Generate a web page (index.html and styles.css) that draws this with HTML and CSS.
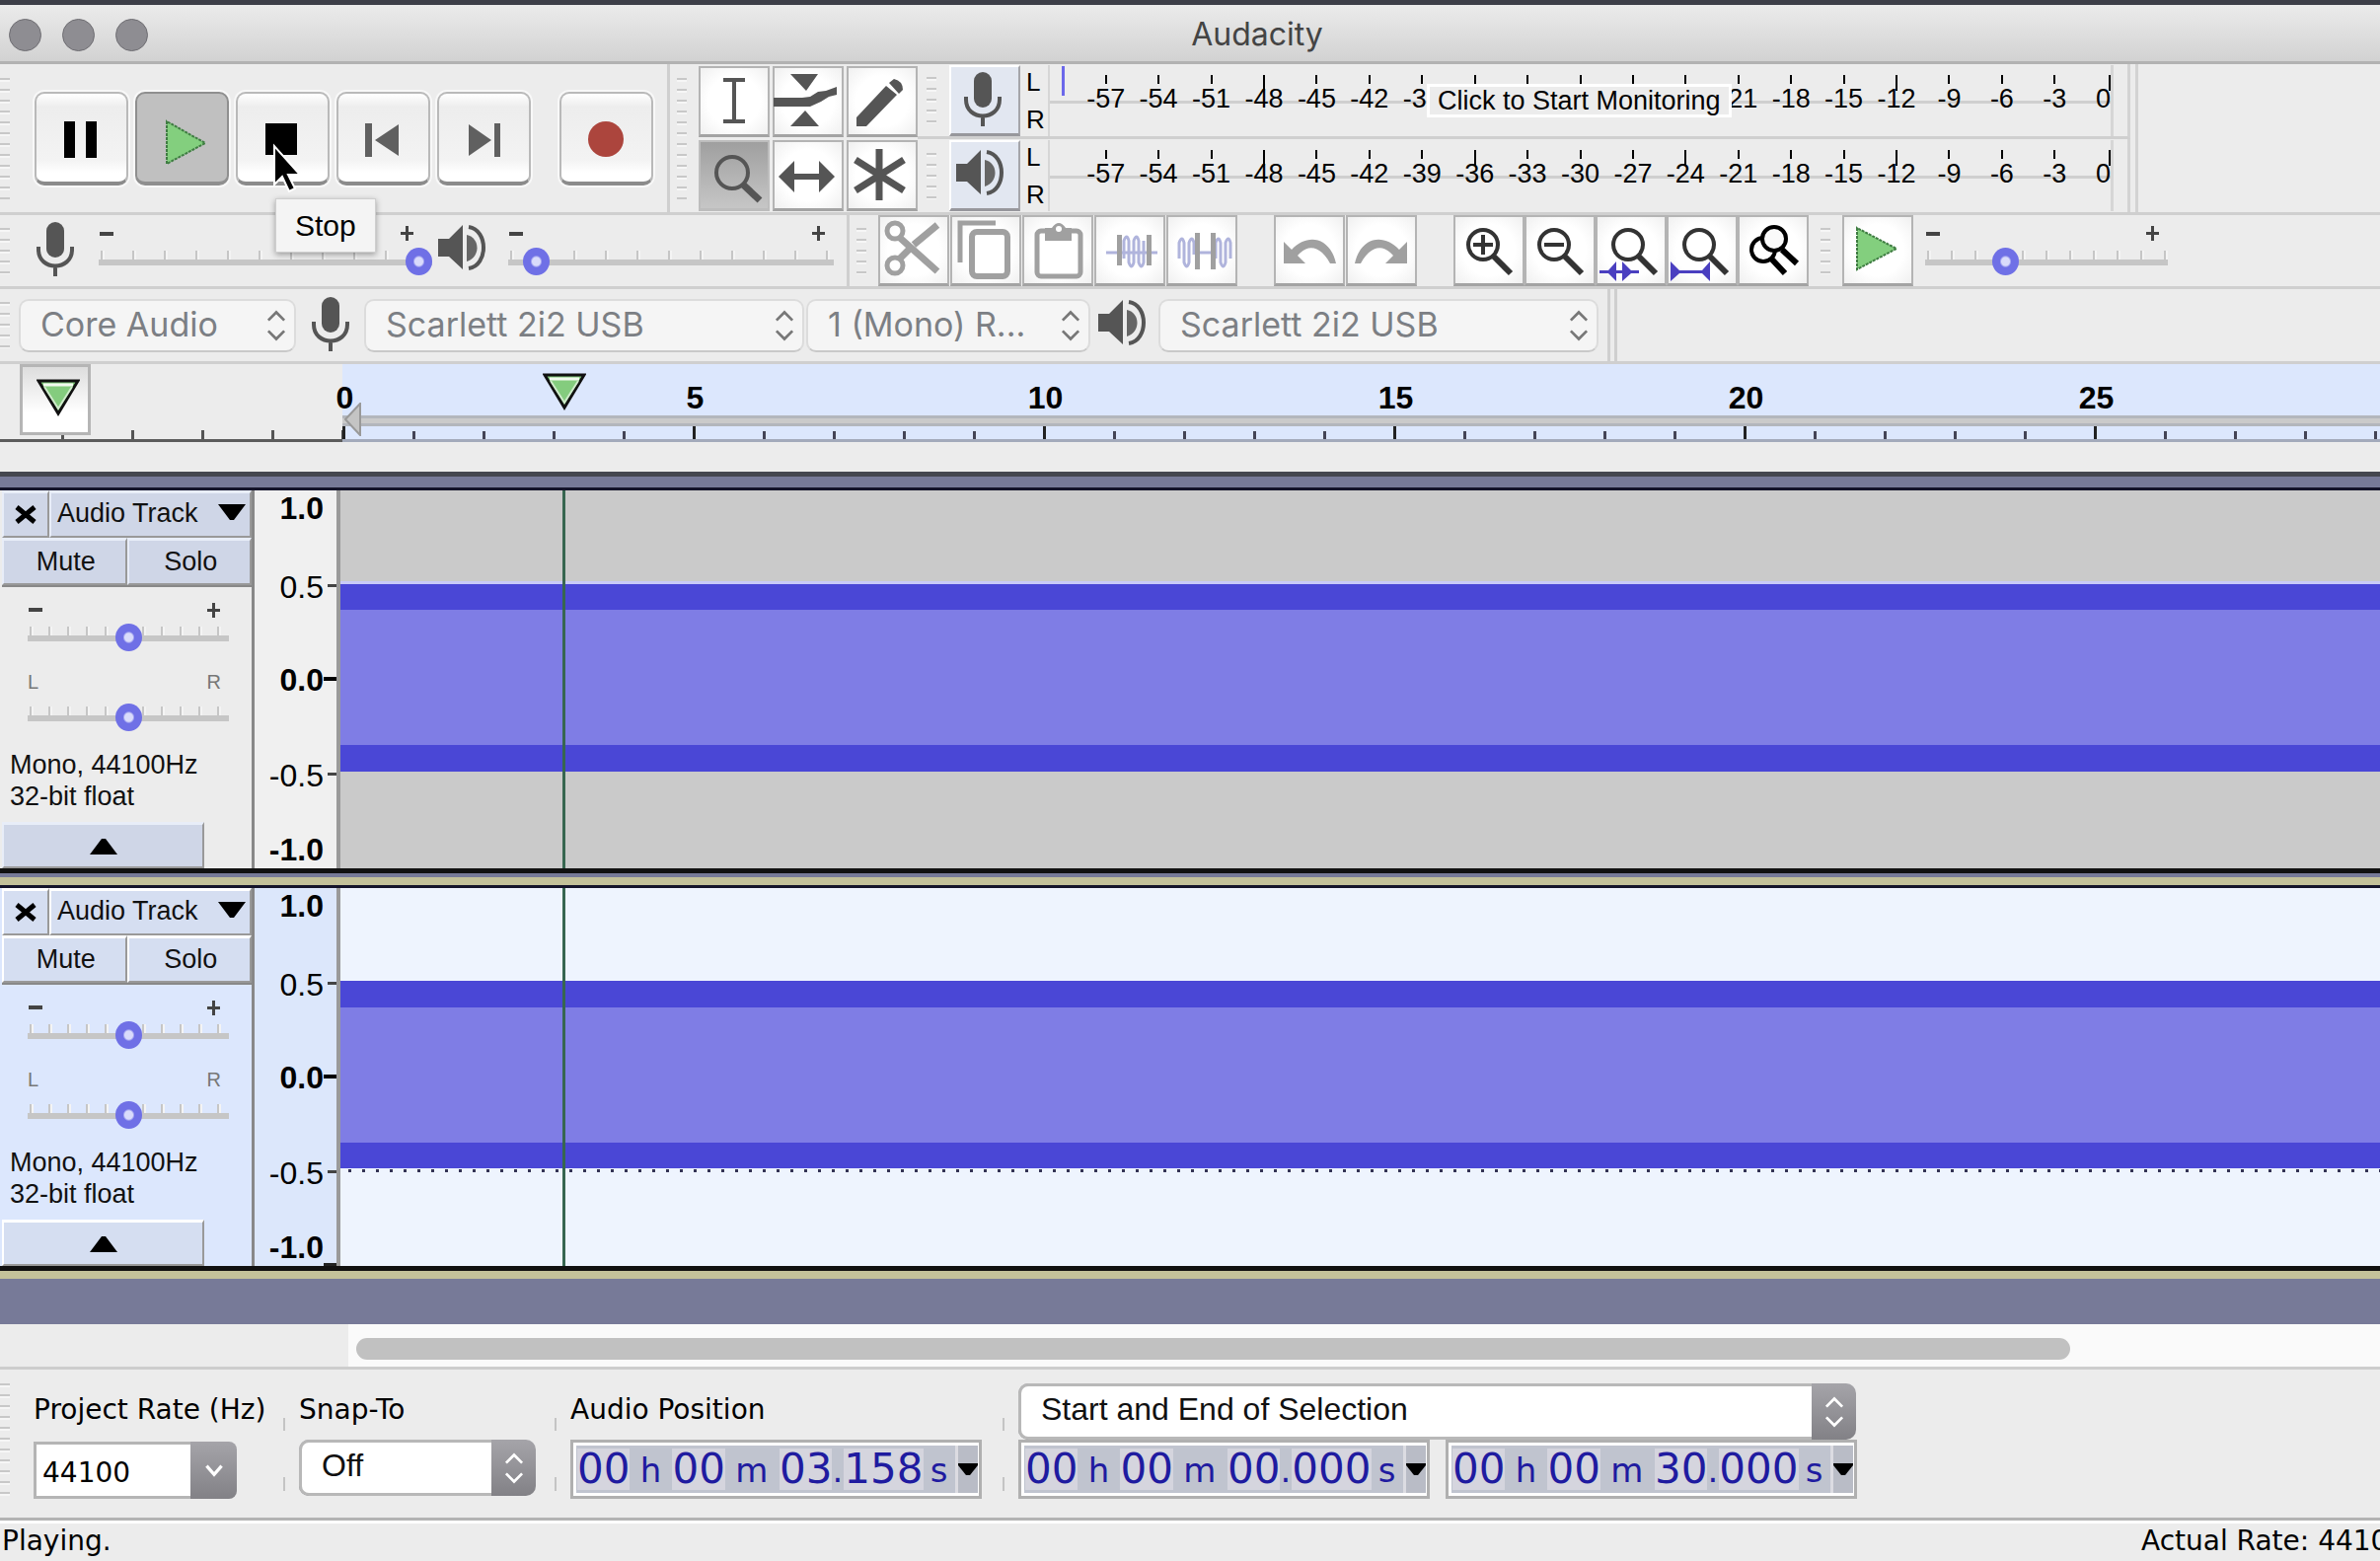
FILE: index.html
```html
<!DOCTYPE html>
<html lang="en">
  <head>
    <meta charset="UTF-8" />
    <title>Audacity</title>
    <link rel="stylesheet" href="styles.css">
  </head>
  <body>
    <svg class="defs" aria-hidden="true">
      <symbol id="mic" viewBox="0 0 72 72">
        <rect x="25" y="7" width="18" height="36" rx="9" fill="#555" />
        <path d="M17 32v3c0 22 34 22 34 0v-3M34 51v11" fill="none" stroke="#555" stroke-width="4" />
      </symbol>
      <symbol id="speaker" viewBox="0 0 72 72">
        <path d="M7 24h11l14-14v45L18 42H7z" fill="#555" />
        <path d="M36 20c14 3 14 23 0 27z" fill="#666" />
        <path d="M38 12c20 3 20 39 0 42" fill="none" stroke="#555" stroke-width="4" />
      </symbol>
      <symbol id="play" viewBox="0 0 72 72">
        <path d="M15 13v42l40-21z" fill="#83cf7e" stroke="#3f7d42" stroke-width="2" stroke-dasharray="3 1" />
      </symbol>
      <symbol id="updown" viewBox="0 0 24 40">
        <path d="M3 14l9-9 9 9M3 26l9 9 9-9" fill="none" stroke="currentColor" stroke-width="3" />
      </symbol>
      <symbol id="undo" viewBox="0 0 72 72">
        <path d="M10 27v22h22l-8-8c11-13 24-9 33 8h6C57 22 34 18 18 35z" fill="#a0a0a0" />
      </symbol>
      <symbol id="marker" viewBox="0 0 44 38">
        <path d="M2 2h40L22 35z" fill="#84cc7e" stroke="#111" stroke-width="3" />
        <path d="M7 6h30" stroke="#f2faef" stroke-width="3" />
        <path d="M8 8l14 22L36 8" fill="none" stroke="#cfeacb" stroke-width="2" />
      </symbol>
    </svg>

    <header class="titlebar">
      <div class="lights">
        <button aria-label="Close window"></button>
        <button aria-label="Minimize window"></button>
        <button aria-label="Zoom window"></button>
      </div>
      <h1>Audacity</h1>
    </header>

    <div class="toolbar toolbar-top">
      <section class="transport">
        <span class="grip"></span>
        <div class="transport-buttons">
          <button class="big" aria-label="Pause"><svg viewBox="0 0 95 95"><path d="M30 30h11v37H30zM52 30h11v37H52z" /></svg></button>
          <button class="big pressed" aria-label="Play"><svg viewBox="0 0 95 95"><path d="M32 30v43l39-21z" fill="#83cf7e" stroke="#3f7d42" stroke-width="2" stroke-dasharray="3 1" /></svg></button>
          <button class="big" aria-label="Stop"><svg viewBox="0 0 95 95"><path d="M30 32h32v32H30z" /></svg></button>
          <button class="big" aria-label="Skip to start"><svg viewBox="0 0 95 95"><path d="M29 32h7v34h-7zM63 33v32L39 49z" fill="#606060" /></svg></button>
          <button class="big" aria-label="Skip to end"><svg viewBox="0 0 95 95"><path d="M58 32h6v34h-6zM32 33v32l23-16z" fill="#606060" /></svg></button>
          <button class="big record" aria-label="Record"><svg viewBox="0 0 95 95"><circle cx="47" cy="48" r="18" fill="#ac453d" /></svg></button>
        </div>
        <svg class="cursor" viewBox="0 0 32 52"><path d="M2 3v39l8-8 7 15 6-3-7-14h12z" stroke="#fff" stroke-width="2" /></svg>
        <div class="tooltip">Stop</div>
      </section>

      <section class="tools">
        <span class="grip"></span>
        <div class="tool-grid">
          <button class="tool" aria-label="Selection tool"><svg viewBox="0 0 72 72"><path d="M25 14h22M25 56h22M36 14v42" fill="none" stroke="#555" stroke-width="4" /></svg></button>
          <button class="tool" aria-label="Envelope tool"><svg viewBox="0 0 72 72"><path d="M18 8h28L34 25zM18 61h29L33 45zM1 32h29l8-1 8-5 8-1 11-4v8l-8 2-8 5-11 5H1z" fill="#555" /></svg></button>
          <button class="tool" aria-label="Draw tool"><svg viewBox="0 0 72 72"><path d="M10 61V52L40 20l11 9-31 32zM43 17l5-4q9 2 9 11l-4 4z" fill="#555" /></svg></button>
          <button class="tool tool-on" aria-label="Zoom tool"><svg viewBox="0 0 72 72"><circle cx="34" cy="33" r="16" fill="none" stroke="#555" stroke-width="4" /><path d="M45 45l17 16" stroke="#555" stroke-width="7" /></svg></button>
          <button class="tool" aria-label="Time shift tool"><svg viewBox="0 0 72 72"><path d="M6 37l16-16v13h25V21l16 16-16 16V40H22v13z" fill="#555" /></svg></button>
          <button class="tool" aria-label="Multi-tool"><svg viewBox="0 0 72 72"><path d="M33 9v52M9 20l49 31M58 20L9 51" stroke="#555" stroke-width="7" /></svg></button>
        </div>
      </section>

      <section class="meters">
        <div class="meter">
          <span class="grip"></span>
          <button class="meter-button" aria-label="Recording meter"><svg viewBox="0 0 72 72"><use href="#mic" /></svg></button>
          <div class="channels"><span>L</span><span>R</span></div>
          <div class="scale">
            <span>-57</span><span>-54</span><span>-51</span><span class="long">-48</span>
            <span>-45</span><span>-42</span><span>-39</span><span class="long">-36</span>
            <span>-33</span><span>-30</span><span>-27</span><span class="long">-24</span>
            <span>-21</span><span>-18</span><span>-15</span><span class="long">-12</span>
            <span>-9</span><span>-6</span><span>-3</span><span class="long zero">0</span>
            <i class="level"></i>
            <button class="monitor">Click to Start Monitoring</button>
          </div>
        </div>
        <div class="meter">
          <span class="grip"></span>
          <button class="meter-button" aria-label="Playback meter"><svg viewBox="0 0 72 72"><use href="#speaker" /></svg></button>
          <div class="channels"><span>L</span><span>R</span></div>
          <div class="scale">
            <span>-57</span><span>-54</span><span>-51</span><span class="long">-48</span>
            <span>-45</span><span>-42</span><span>-39</span><span class="long">-36</span>
            <span>-33</span><span>-30</span><span>-27</span><span class="long">-24</span>
            <span>-21</span><span>-18</span><span>-15</span><span class="long">-12</span>
            <span>-9</span><span>-6</span><span>-3</span><span class="long zero">0</span>
          </div>
        </div>
      </section>
    </div>

    <div class="toolbar toolbar-edit">
      <section class="mixer">
        <span class="grip"></span>
        <svg class="icon" viewBox="0 0 72 72"><use href="#mic" /></svg>
        <div class="slider slider-mix slider-record">
          <div class="ends"><span class="minus"></span><span class="plus"></span></div>
          <input type="range" aria-label="Recording volume" value="100" />
        </div>
        <svg class="icon" viewBox="0 0 72 72"><use href="#speaker" /></svg>
        <div class="slider slider-mix">
          <div class="ends"><span class="minus"></span><span class="plus"></span></div>
          <input type="range" aria-label="Playback volume" value="5" />
        </div>
      </section>

      <section class="edit">
        <span class="grip"></span>
        <div class="group">
          <button class="tool" aria-label="Cut"><svg viewBox="0 0 72 72"><g fill="none" stroke="#a0a0a0"><circle cx="17" cy="16" r="8" stroke-width="5" /><circle cx="17" cy="51" r="8" stroke-width="5" /><path d="M22 23l38 34M22 44l11-11M36 30l24-20" stroke-width="7" /></g></svg></button>
          <button class="tool" aria-label="Copy"><svg viewBox="0 0 72 72"><g fill="none" stroke="#a0a0a0"><rect x="22" y="17" width="36" height="45" rx="5" stroke-width="6" /><path d="M10 48V8h36" stroke-width="5" /></g></svg></button>
          <button class="tool" aria-label="Paste"><svg viewBox="0 0 72 72"><rect x="15" y="16" width="44" height="46" rx="4" fill="none" stroke="#a0a0a0" stroke-width="5" /><path d="M23 13h7q7-10 14 0h6v13H23z" fill="#a0a0a0" /><circle cx="37" cy="14" r="3" fill="#fff" /></svg></button>
          <button class="tool" aria-label="Trim audio"><svg viewBox="0 0 72 72"><path d="M12 38h52M30 44V26q3-8 5 0v22q3 8 5 0V26q3-8 5 0v22q3 8 5 0V26" fill="none" stroke="#b0b4dc" stroke-width="3" /><path d="M23 20h5v31h-5zM53 20h5v31h-5z" fill="#a0a0a0" /></svg></button>
          <button class="tool" aria-label="Silence audio"><svg viewBox="0 0 72 72"><path d="M13 44V28q3-8 5 0v20q3 8 5 0V28q3-8 5 0v12M31 38h17M50 44V28q3-8 5 0v20q3 8 5 0V28q3-8 5 0v16" fill="none" stroke="#b0b4dc" stroke-width="3" /><path d="M29 18h5v37h-5zM45 18h5v37h-5z" fill="#a0a0a0" /></svg></button>
        </div>
        <div class="group">
          <button class="tool" aria-label="Undo"><svg viewBox="0 0 72 72"><use href="#undo" /></svg></button>
          <button class="tool" aria-label="Redo"><svg viewBox="0 0 72 72"><g transform="matrix(-1 0 0 1 72 0)"><use href="#undo" /></g></svg></button>
        </div>
        <div class="group zooms">
          <button class="tool" aria-label="Zoom in"><svg viewBox="0 0 72 72"><g fill="none" stroke="#333"><circle cx="30" cy="30" r="15" stroke-width="4" /><path d="M41 42l17 17" stroke-width="6" /><path d="M20 30h20M30 20v20" stroke-width="4" /></g></svg></button>
          <button class="tool" aria-label="Zoom out"><svg viewBox="0 0 72 72"><g fill="none" stroke="#333"><circle cx="30" cy="30" r="15" stroke-width="4" /><path d="M41 42l17 17" stroke-width="6" /><path d="M20 30h20" stroke-width="4" /></g></svg></button>
          <button class="tool" aria-label="Fit selection"><svg viewBox="0 0 72 72"><g fill="none" stroke="#333"><circle cx="33" cy="30" r="15" stroke-width="4" /><path d="M44 42l17 17" stroke-width="6" /></g><path d="M4 56h9l8-9v9h6v-9l9 9h8v3h-8l-9 8v-8h-6v8l-8-8H4z" fill="#4a3fc0" /></svg></button>
          <button class="tool" aria-label="Fit project"><svg viewBox="0 0 72 72"><g fill="none" stroke="#333"><circle cx="33" cy="30" r="15" stroke-width="4" /><path d="M44 42l17 17" stroke-width="6" /></g><path d="M4 47l9 9h23l8-9v20l-8-8H13l-9 8z" fill="#4a3fc0" /></svg></button>
          <button class="tool" aria-label="Zoom toggle"><svg viewBox="0 0 72 72"><g fill="none" stroke="#000"><circle cx="26" cy="35" r="12" stroke-width="4" /><circle cx="37" cy="24" r="12" fill="#fafafa" stroke-width="4" /><path d="M45 35l15 14M34 44l14 15" stroke-width="6" /></g></svg></button>
        </div>
      </section>

      <section class="playspeed">
        <span class="grip"></span>
        <button class="tool" aria-label="Play at speed"><svg viewBox="0 0 72 72"><use href="#play" /></svg></button>
        <div class="slider slider-speed">
          <div class="ends"><span class="minus"></span><span class="plus"></span></div>
          <input type="range" aria-label="Playback speed" value="31" />
        </div>
      </section>
    </div>

    <div class="toolbar toolbar-device">
      <span class="grip"></span>
      <div class="select select-host">
        <select aria-label="Audio host"><option>Core Audio</option></select>
        <svg viewBox="0 0 24 40"><use href="#updown" /></svg>
      </div>
      <svg class="icon" viewBox="0 0 72 72"><use href="#mic" /></svg>
      <div class="select select-device">
        <select aria-label="Recording device"><option>Scarlett 2i2 USB</option></select>
        <svg viewBox="0 0 24 40"><use href="#updown" /></svg>
      </div>
      <div class="select select-channels">
        <select aria-label="Recording channels"><option>1 (Mono) R...</option></select>
        <svg viewBox="0 0 24 40"><use href="#updown" /></svg>
      </div>
      <svg class="icon" viewBox="0 0 72 72"><use href="#speaker" /></svg>
      <div class="select select-device">
        <select aria-label="Playback device"><option>Scarlett 2i2 USB</option></select>
        <svg viewBox="0 0 24 40"><use href="#updown" /></svg>
      </div>
      <span class="toolbar-end"></span>
    </div>

    <div class="timeline">
      <div class="timeline-left">
        <button class="pin" aria-label="Pinned play head"><svg viewBox="0 0 44 38"><use href="#marker" /></svg></button>
      </div>
      <div class="timeline-ruler">
        <div class="seconds"><span>0</span><span>5</span><span>10</span><span>15</span><span>20</span><span>25</span></div>
        <div class="play-region"></div>
        <div class="ticks"></div>
        <svg class="region-start" viewBox="0 0 17 34"><path d="M1 17L16 1v32z" fill="#c4c4c4" stroke="#999" stroke-width="2" /></svg>
        <svg class="playhead" viewBox="0 0 44 38"><use href="#marker" /></svg>
      </div>
    </div>

    <main class="tracks">
      <article class="track">
        <div class="panel">
          <div class="panel-row">
            <button class="close" aria-label="Close track"><svg viewBox="0 0 24 24"><path d="M3 4l18 15M21 4L3 19" stroke="#000" stroke-width="5" /></svg></button>
            <button class="name">Audio Track<svg viewBox="0 0 28 17"><path d="M0 0h28L16 16h-4z" /></svg></button>
          </div>
          <div class="panel-row">
            <button class="half">Mute</button>
            <button class="half">Solo</button>
          </div>
          <div class="panel-body">
            <div class="slider">
              <div class="ends"><span class="minus"></span><span class="plus"></span></div>
              <input type="range" aria-label="Gain" />
            </div>
            <div class="slider">
              <div class="ends"><span>L</span><span>R</span></div>
              <input type="range" aria-label="Pan" />
            </div>
            <p>Mono, 44100Hz<br>32-bit float</p>
            <button class="collapse" aria-label="Collapse track"><svg viewBox="0 0 28 17"><path d="M0 17h28L16 1h-4z" /></svg></button>
          </div>
        </div>
        <div class="vruler">
          <b>1.0</b><span class="tick">0.5</span><b class="tick">0.0</b><span class="tick">-0.5</span><b class="last">-1.0</b>
        </div>
        <div class="wave"><i class="playline"></i></div>
      </article>

      <article class="track selected">
        <div class="panel">
          <div class="panel-row">
            <button class="close" aria-label="Close track"><svg viewBox="0 0 24 24"><path d="M3 4l18 15M21 4L3 19" stroke="#000" stroke-width="5" /></svg></button>
            <button class="name">Audio Track<svg viewBox="0 0 28 17"><path d="M0 0h28L16 16h-4z" /></svg></button>
          </div>
          <div class="panel-row">
            <button class="half">Mute</button>
            <button class="half">Solo</button>
          </div>
          <div class="panel-body">
            <div class="slider">
              <div class="ends"><span class="minus"></span><span class="plus"></span></div>
              <input type="range" aria-label="Gain" />
            </div>
            <div class="slider">
              <div class="ends"><span>L</span><span>R</span></div>
              <input type="range" aria-label="Pan" />
            </div>
            <p>Mono, 44100Hz<br>32-bit float</p>
            <button class="collapse" aria-label="Collapse track"><svg viewBox="0 0 28 17"><path d="M0 17h28L16 1h-4z" /></svg></button>
          </div>
        </div>
        <div class="vruler">
          <b>1.0</b><span class="tick">0.5</span><b class="tick">0.0</b><span class="tick">-0.5</span><b class="last">-1.0</b>
        </div>
        <div class="wave"><i class="playline"></i></div>
      </article>
    </main>

    <div class="scrollbar"><div class="scroll-lane"><div class="thumb"></div></div></div>

    <footer class="selection-bar">
      <span class="grip"></span>
      <div class="field field-rate">
        <label for="rate">Project Rate (Hz)</label>
        <div class="combo">
          <input type="text" id="rate" value="44100" />
          <button aria-label="Choose rate"><svg viewBox="0 0 24 24"><path d="M5 8l7 8 7-8" fill="none" stroke="#fff" stroke-width="3" /></svg></button>
        </div>
      </div>
      <span class="dots"></span>
      <div class="field field-snap">
        <label for="snap">Snap-To</label>
        <div class="select select-light">
          <select id="snap"><option>Off</option></select>
          <svg viewBox="0 0 24 40"><use href="#updown" /></svg>
        </div>
      </div>
      <span class="dots"></span>
      <div class="field field-position">
        <span class="label">Audio Position</span>
        <div class="time" role="group" aria-label="Audio Position">
          <b>00</b><i class="h">h</i><b>00</b><i class="m">m</i><b>03</b><i class="dot">.</i><b>158</b><i class="s">s</i>
          <button aria-label="Time format"><svg viewBox="0 0 20 12"><path d="M0 0h20v2L12 12H8L0 2z" /></svg></button>
        </div>
      </div>
      <span class="dots"></span>
      <div class="field field-range">
        <div class="select select-light">
          <select aria-label="Selection mode"><option>Start and End of Selection</option></select>
          <svg viewBox="0 0 24 40"><use href="#updown" /></svg>
        </div>
        <div class="times">
          <div class="time" role="group" aria-label="Selection start">
            <b>00</b><i class="h">h</i><b>00</b><i class="m">m</i><b>00</b><i class="dot">.</i><b>000</b><i class="s">s</i>
            <button aria-label="Time format"><svg viewBox="0 0 20 12"><path d="M0 0h20v2L12 12H8L0 2z" /></svg></button>
          </div>
          <div class="time" role="group" aria-label="Selection end">
            <b>00</b><i class="h">h</i><b>00</b><i class="m">m</i><b>30</b><i class="dot">.</i><b>000</b><i class="s">s</i>
            <button aria-label="Time format"><svg viewBox="0 0 20 12"><path d="M0 0h20v2L12 12H8L0 2z" /></svg></button>
          </div>
        </div>
      </div>
    </footer>

    <div class="status">
      <span>Playing.</span>
      <span class="actual">Actual Rate: 44100</span>
    </div>
  </body>
</html>
```

FILE: styles.css
```css
* {
  box-sizing: border-box;
}
body {
  margin: 0;
  background: #ececec;
  color: #000;
  font-family: "Liberation Sans", Arial, sans-serif;
  font-size: 27px;
  overflow: hidden;
}
button,
select,
input {
  font: inherit;
  color: inherit;
  margin: 0;
  padding: 0;
  border: 0;
  border-radius: 0;
}
svg {
  display: block;
  flex: none;
}
.defs {
  position: absolute;
  width: 0;
  height: 0;
}

/* title bar */
.titlebar {
  display: grid;
  grid-template-columns: 1fr auto 1fr;
  align-items: center;
  height: 65px;
  padding: 3px 9px 0;
  border-top: 5px solid #3d3f48;
  border-bottom: 3px solid #b2b2b2;
  background: linear-gradient(#ebebeb, #d2d2d2);
}
.titlebar h1 {
  grid-column: 2;
  margin: 0 0 0 136px;
  font: 400 32px/40px Inter, sans-serif;
  color: #444;
}
.lights {
  display: flex;
  gap: 21px;
}
.lights button {
  width: 33px;
  height: 33px;
  border: 1px solid #6e6d72;
  border-radius: 50%;
  background: #8e8d92;
}

/* toolbars */
.toolbar {
  display: flex;
  border-bottom: 3px solid #cfcfcf;
}
.toolbar section {
  display: flex;
  align-items: center;
}
.grip {
  flex: none;
  width: 10px;
  height: 47px;
  background: repeating-linear-gradient(#c8c8c8 0 2px, #f6f6f6 2px 4px, transparent 4px 11px);
}
.icon {
  width: 72px;
  height: 72px;
}
.transport {
  position: relative;
  width: 679px;
  border-right: 3px solid #cfcfcf;
}
.transport .grip,
.tools .grip {
  height: 123px;
}
.transport-buttons {
  display: flex;
  gap: 7px;
  margin-left: 25px;
}
.big {
  width: 95px;
  height: 95px;
  border: 2px solid #b9b9b9;
  border-bottom: 4px solid #8b8b8b;
  border-radius: 10px;
  background: linear-gradient(#fff, #ededed 15%, #f3f3f3 75%, #fff 90%);
  box-shadow: 0 0 0 2px #f8f8f8;
}
.big svg {
  width: 95px;
  height: 95px;
  margin: -2px;
}
.big.pressed {
  border-color: #8f8f8f;
  background: #c0c0c0;
}
.record {
  margin-left: 22px;
}
.cursor {
  position: absolute;
  z-index: 3;
  left: 276px;
  top: 80px;
  width: 32px;
  height: 52px;
}
.tooltip {
  position: absolute;
  z-index: 2;
  left: 279px;
  top: 136px;
  padding: 0 19px;
  border: 1px solid #cfcfcf;
  background: #f4f4f4;
  box-shadow: 0 2px 6px rgba(0, 0, 0, 0.35);
  font-size: 30px;
  line-height: 53px;
}
.tools {
  gap: 12px;
  padding-left: 7px;
}
.tool-grid {
  display: grid;
  grid-template-columns: repeat(3, 72px);
  gap: 3px;
}
.tool {
  flex: none;
  width: 72px;
  height: 72px;
  border: 2px solid #b4b4b4;
  border-bottom: 3px solid #a3a3a3;
  background: radial-gradient(#fff 55%, #f0f0f0);
}
.tool svg,
.meter-button svg {
  width: 72px;
  height: 72px;
  margin: -2px;
}
.tool-on {
  border-color: #bdbdbd;
  background: linear-gradient(#9f9f9f, #c6c6c6);
}

/* level meters */
.toolbar .meters {
  display: block;
  padding-right: 5px;
  border-right: 3px solid #d3d3d3;
}
.meter {
  display: flex;
  align-items: center;
  height: 74px;
  padding: 0 14px 0 9px;
  border-right: 3px solid #d3d3d3;
}
.meter:first-child {
  height: 76px;
  border-bottom: 3px solid #cfcfcf;
}
.meter-button {
  width: 72px;
  height: 72px;
  margin-left: 13px;
  border: 2px solid #fff;
  border-right-color: #a5a5aa;
  border-bottom: 3px solid #97979c;
  background: #e2e7f1;
}
.channels {
  display: flex;
  flex-direction: column;
  justify-content: space-between;
  width: 28px;
  height: 64px;
  padding-left: 6px;
  font-size: 26px;
  line-height: 26px;
}
.scale {
  position: relative;
  display: flex;
  width: 1080px;
  height: 72px;
  padding: 10px 0 0 30px;
  border-left: 2px solid #d6d6d6;
  border-right: 3px solid #d6d6d6;
  background: linear-gradient(#cfcfcf, #cfcfcf) 0 36px / 100% 3px no-repeat;
}
.scale span {
  display: grid;
  flex: 1 1 0;
  justify-items: center;
  align-content: start;
  line-height: 30px;
}
.scale span::before {
  content: "";
  width: 2px;
  height: 9px;
  background: #000;
}
.scale .long::before {
  height: 16px;
  margin-bottom: -7px;
}
.scale .zero {
  flex: none;
  width: 30px;
  justify-items: end;
}
.level {
  position: absolute;
  left: 12px;
  top: 1px;
  width: 3px;
  height: 30px;
  background: #6b68ea;
}
.monitor {
  position: absolute;
  left: 382px;
  top: 19px;
  height: 34px;
  padding: 0 8px;
  border: 3px solid #fff;
  background: #ececec;
  line-height: 28px;
  white-space: nowrap;
}

/* sliders */
.slider {
  width: 204px;
}
.slider-mix {
  width: 330px;
}
.slider-record {
  width: 338px;
}
.slider-speed {
  width: 246px;
}
.ends {
  display: flex;
  justify-content: space-between;
  align-items: center;
  height: 16px;
  padding-right: 8px;
  font-size: 20px;
  color: #777;
}
.slider-record .ends {
  padding-right: 18px;
}
.minus,
.plus {
  width: 15px;
  height: 15px;
  background: linear-gradient(#444, #444) center / 14px 4px no-repeat;
}
.plus {
  background: linear-gradient(#444, #444) center / 13px 3px no-repeat,
    linear-gradient(#444, #444) center / 3px 15px no-repeat;
}
.slider input {
  display: block;
  appearance: none;
  width: 100%;
  height: 30px;
  margin-top: 5px;
  background: linear-gradient(#c6c6c6, #c6c6c6) 0 13px / 100% 6px no-repeat,
    repeating-linear-gradient(90deg, #c6c6c6 0 2px, #f4f4f4 2px 4px, transparent 4px 19px) 2px 4px / 100% 9px no-repeat;
}
.slider-mix input {
  background: linear-gradient(#c6c6c6, #c6c6c6) 0 13px / 100% 6px no-repeat,
    repeating-linear-gradient(90deg, #c6c6c6 0 2px, #f4f4f4 2px 4px, transparent 4px 32px) 2px 4px / 100% 9px no-repeat;
}
.slider-speed input {
  background: linear-gradient(#c6c6c6, #c6c6c6) 0 13px / 100% 6px no-repeat,
    repeating-linear-gradient(90deg, #c6c6c6 0 2px, #f4f4f4 2px 4px, transparent 4px 24px) 2px 4px / 100% 9px no-repeat;
}
.slider input::-webkit-slider-thumb {
  appearance: none;
  width: 27px;
  height: 28px;
  border-radius: 50%;
  background: radial-gradient(#d9dbfb 0 4px, #6f70e6 6px);
}

/* mixer, edit and play-at-speed */
.toolbar-edit {
  height: 75px;
}
.mixer {
  width: 861px;
  border-right: 3px solid #cfcfcf;
}
.mixer .icon:nth-of-type(1) {
  margin: 0 6px 0 12px;
}
.mixer .icon:nth-of-type(2) {
  margin: 0 6px 0 -1px;
}
.edit .grip {
  margin: 0 12px 0 7px;
}
.group {
  display: flex;
  gap: 1px;
  margin-right: 37px;
}
.zooms {
  gap: 0;
  margin-right: 12px;
}
.playspeed .tool {
  margin: 0 12px;
}

/* device toolbar */
.toolbar-device {
  align-items: center;
  height: 76px;
}
.toolbar-end {
  align-self: stretch;
  width: 10px;
  margin-left: 9px;
  border: 3px solid #cfcfcf;
  border-width: 0 3px;
}
.select {
  display: grid;
  align-items: center;
}
.select select,
.select svg {
  grid-area: 1 / 1;
}
.select svg {
  justify-self: end;
  width: 22px;
  height: 36px;
  margin-right: 9px;
  color: #777;
  pointer-events: none;
}
.select select {
  appearance: none;
  width: 100%;
  height: 54px;
  padding: 0 20px 2px;
  border: 2px solid #dcdcdc;
  border-bottom-color: #c9c9c9;
  border-radius: 10px;
  background: #f5f5f5;
  color: #7c7f84;
  font: 34px Inter, sans-serif;
}
.select-host {
  width: 281px;
  margin-left: 9px;
}
.select-device {
  width: 446px;
}
.select-channels {
  width: 288px;
  margin-left: 2px;
}
.toolbar-device .icon {
  margin: 0 -4px 0 1px;
}

/* time ruler */
.timeline {
  display: grid;
  grid-template-columns: 347px 1fr;
  height: 79px;
}
.timeline-left {
  padding-left: 20px;
  border-bottom: 3px solid #5c5c5c;
  background: repeating-linear-gradient(90deg, transparent 0 62px, #555 62px 65px, transparent 65px 71px) 0 100% / 100% 9px no-repeat;
}
.pin {
  display: grid;
  place-items: center;
  width: 72px;
  height: 72px;
  padding: 0 0 4px 6px;
  border: 3px solid #b5b5b5;
  background: linear-gradient(#ddd, #fff 70%);
}
.pin svg,
.playhead {
  width: 44px;
  height: 38px;
}
.timeline-ruler {
  position: relative;
  display: flex;
  flex-direction: column;
  border-bottom: 3px solid #a3aabb;
  background: #dce7fd;
}
.seconds {
  display: flex;
  margin-left: -175px;
  padding-top: 16px;
  font-weight: bold;
  font-size: 32px;
  line-height: 36px;
  text-align: center;
}
.seconds span {
  flex: none;
  width: 355px;
}
.play-region {
  height: 11px;
  border: 3px solid #b3b6bc;
  border-width: 3px 0;
  background: #cacaca;
}
.ticks {
  flex: 1;
  background: repeating-linear-gradient(90deg, #222 0 3px, transparent 3px 355px) 0 0 / 100% 100%,
    repeating-linear-gradient(90deg, #445 0 3px, transparent 3px 71px) 0 100% / 100% 8px no-repeat;
}
.region-start {
  position: absolute;
  left: 2px;
  top: 39px;
  width: 17px;
  height: 34px;
}
.playhead {
  position: absolute;
  left: 203px;
  top: 9px;
}

/* tracks */
.tracks {
  padding: 11px 0 54px;
  margin-top: 30px;
  border-top: 5px solid #45474f;
  background: #777a98;
}
.track {
  display: grid;
  grid-template-columns: 258px 87px 1fr;
  height: 391px;
  border-top: 3px solid #14142a;
  border-bottom: 5px solid #111;
}
.track.selected {
  margin-top: 12px;
  outline: 8px solid #c3c19a;
}
.panel {
  display: flex;
  flex-direction: column;
  padding-left: 2px;
  border-right: 3px solid #888;
  background: #ececec;
  color: #111;
}
.panel-row {
  display: flex;
  height: 48px;
}
.panel button {
  border: 2px solid #999;
  border-top: 3px solid #e8edf8;
  border-left-color: #e8edf8;
  background: #cfd6e7;
  line-height: 38px;
}
.panel .close {
  width: 48px;
}
.close svg {
  width: 24px;
  height: 24px;
  margin: 0 auto;
}
.panel .name {
  display: flex;
  flex: 1;
  align-items: center;
  justify-content: space-between;
  padding: 0 4px 4px 6px;
}
.name svg,
.collapse svg {
  width: 28px;
  height: 17px;
}
.panel .half {
  flex: 1;
  padding: 0 0 2px 3px;
}
.panel-body {
  display: flex;
  flex: 1;
  flex-direction: column;
  border-top: 2px solid #888;
}
.panel-body .slider {
  margin: 15px 0 0 26px;
}
.panel-body .slider + .slider {
  margin-top: 22px;
}
.panel-body .slider + .slider input {
  margin-top: 13px;
}
.panel-body p {
  margin: 17px 0 auto 8px;
  line-height: 32px;
}
.collapse {
  width: 205px;
  height: 47px;
}
.collapse svg {
  margin: 0 auto;
}
.vruler {
  display: grid;
  grid-template-rows: 80px 94px 97px 75px 1fr;
  border-right: 4px solid #9a9a9a;
  background: #f0f0f0;
  font-size: 32px;
  line-height: 36px;
}
.vruler b,
.vruler span {
  padding-right: 13px;
  text-align: right;
}
.vruler .tick {
  background: linear-gradient(#444, #444) 100% 15px / 9px 3px no-repeat;
}
.vruler b.tick {
  background: linear-gradient(#000, #000) 100% 15px / 13px 4px no-repeat;
}
.wave {
  position: relative;
  background: linear-gradient(#cacaca 0 92px, #c9caf8 92px 95px, #4a47d6 95px 121px, #7f7de5 121px 258px, #4a47d6 258px 285px, #cacaca 285px);
}
.playline {
  position: absolute;
  left: 225px;
  top: 0;
  bottom: 0;
  width: 3px;
  background: #376650;
}
.selected .panel {
  background: #dce7fd;
}
.selected .panel button {
  border-top-color: #fff;
  border-left-color: #fff;
  background: #d5def1;
}
.selected .vruler {
  background: #dce7fb;
}
.selected .last {
  background: linear-gradient(#222, #222) 100% 100% / 13px 3px no-repeat;
}
.selected .wave {
  background: repeating-linear-gradient(90deg, transparent 0 8px, #335 8px 11px, transparent 11px 14px) 0 285px / 100% 3px no-repeat,
    linear-gradient(#eef4fe 0 94px, #4a47d6 94px 121px, #7f7de5 121px 258px, #4a47d6 258px 284px, #eef4fe 284px);
}

/* horizontal scrollbar */
.scrollbar {
  height: 46px;
  padding-left: 353px;
  border-bottom: 3px solid #cdcdcd;
}
.scroll-lane {
  height: 43px;
  padding: 14px 0 0 8px;
  background: #fafafa;
}
.thumb {
  width: 84.7%;
  height: 22px;
  border-radius: 11px;
  background: #c1c1c1;
}

/* selection toolbar */
.selection-bar {
  display: flex;
  align-items: flex-start;
  height: 150px;
  padding-top: 14px;
  font-family: "DejaVu Sans", sans-serif;
  font-size: 28px;
}
.selection-bar .grip {
  height: 121px;
}
.field label,
.field .label {
  display: block;
  height: 57px;
  line-height: 54px;
  white-space: nowrap;
}
.field-rate {
  width: 247px;
  margin-left: 24px;
}
.combo {
  display: flex;
  width: 206px;
  height: 58px;
  margin-top: 2px;
}
.combo input {
  width: 159px;
  padding: 4px 0 0 6px;
  border: 3px solid #b5b5b5;
  border-right: 0;
  background: #fff;
}
.combo button {
  display: grid;
  place-items: center;
  width: 47px;
  border-radius: 0 8px 8px 0;
  background: linear-gradient(#a5a4a9, #828186);
}
.combo svg {
  width: 26px;
  height: 26px;
}
.dots {
  align-self: stretch;
  width: 2px;
  margin: 35px 14px 0 6px;
  background: linear-gradient(#c4c4c4 0 13px, transparent 13px 60px, #c4c4c4 60px 74px, transparent 74px);
}
.field-snap {
  width: 253px;
}
.select-light {
  width: 240px;
  border-radius: 10px;
  background: linear-gradient(#a5a4a9, #828186);
}
.select-light select {
  width: calc(100% - 45px);
  height: 57px;
  padding-bottom: 5px;
  border: 3px solid #b8b8b8;
  border-right: 0;
  border-radius: 10px 0 0 10px;
  background: #fff;
  color: #111;
  font: 32px "Liberation Sans", Arial, sans-serif;
}
.select-light svg {
  color: #fff;
  margin-right: 11px;
}
.field-position {
  width: 432px;
}
.field-range .select-light {
  width: 849px;
}
.times {
  display: flex;
  gap: 16px;
}
.time {
  display: flex;
  align-items: stretch;
  width: 417px;
  height: 60px;
  padding: 3px;
  border: 3px solid #b0b0b0;
  background: linear-gradient(#c0c4cf, #c0c4cf) content-box, #fff;
  color: #1f1ba0;
  line-height: 47px;
}
.time b {
  align-self: center;
  height: 42px;
  margin-left: 1px;
  font-size: 42px;
  font-weight: 400;
  line-height: 42px;
  background: #d5d5de;
}
.time i {
  flex: none;
  font-style: normal;
  font-size: 34px;
  line-height: 50px;
  text-align: center;
}
.time .h {
  width: 42px;
}
.time .m {
  width: 54px;
}
.time .dot {
  width: 11px;
}
.time .s {
  width: 32px;
}
.time button {
  flex: 1;
  border-left: 3px solid #dcdce2;
  background: #b9bcc6;
}
.time svg {
  width: 20px;
  height: 12px;
}

/* status bar */
.status {
  display: flex;
  justify-content: space-between;
  padding-left: 2px;
  border-top: 3px solid #b3b3b3;
  box-shadow: inset 0 3px #fff;
  font: 28px/42px "DejaVu Sans", sans-serif;
  white-space: nowrap;
}
.actual {
  width: 242px;
}
```
